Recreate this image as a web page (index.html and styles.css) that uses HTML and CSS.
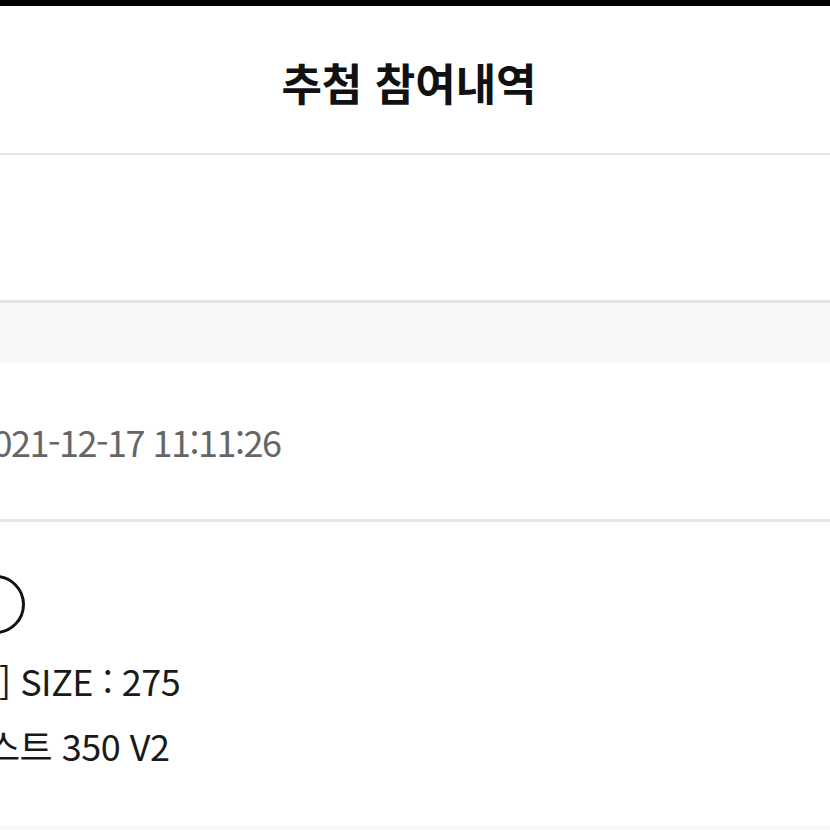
FILE: index.html
```html
<!DOCTYPE html>
<html lang="ko">
<head>
    <meta charset="UTF-8">
    <meta name="viewport" content="width=device-width, initial-scale=1.0">
    <title>추첨 참여내역</title>
    <link rel="stylesheet" href="styles.css">
</head>
<body>

    <div class="topbar"></div>

    <header class="title-bar">
        <h1>추첨 참여내역</h1>
    </header>

    <section class="summary"></section>

    <div class="band"></div>

    <section class="entry">
        <div class="entry-date">2021-12-17 11:11:26</div>
    </section>

    <section class="product">
        <span class="status-dot"></span>
        <p class="product-option">[옵션] SIZE : 275</p>
        <p class="product-name">아디다스 이지부스트 350 V2</p>
    </section>

    <div class="band band-bottom"></div>

</body>
</html>
```

FILE: styles.css
```css
* {
    margin: 0;
    padding: 0;
    box-sizing: border-box;
    font-family: "Noto Sans CJK KR", "Noto Sans", sans-serif;
}

html, body {
    background: #fff;
    overflow: hidden;
}

.topbar {
    height: 6px;
    background: #000;
}

.title-bar {
    height: 149px;
    display: flex;
    align-items: center;
    justify-content: center;
    padding: 4px 12px 0 0;
    border-bottom: 2px solid #e4e4e4;
}

.title-bar h1 {
    font-size: 44px;
    font-weight: 700;
    color: #111;
}

.summary {
    height: 148px;
    border-bottom: 3px solid #e6e6e6;
}

.band {
    height: 60px;
    background: #f7f7f7;
}

.band-bottom {
    height: 4px;
}

.entry {
    height: 159px;
    display: flex;
    align-items: center;
    border-bottom: 3px solid #e6e6e6;
}

.entry-date {
    margin-left: -26px;
    font-size: 36px;
    color: #666;
    letter-spacing: -1.5px;
}

.product {
    height: 304px;
    padding-top: 53px;
}

.status-dot {
    display: block;
    width: 59px;
    height: 59px;
    margin-left: -34px;
    border: 3px solid #111;
    border-radius: 50%;
}

.product-option,
.product-name {
    font-size: 36px;
    line-height: 65px;
    color: #1a1a1a;
    letter-spacing: -0.5px;
    white-space: nowrap;
}

.product-option {
    margin: 14px 0 0 -78px;
}

.product-name {
    margin-left: -251px;
}
```
